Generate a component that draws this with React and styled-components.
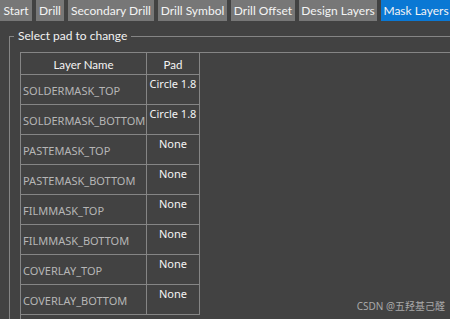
import React from "react";
import styled, { createGlobalStyle } from "styled-components";

const tabs = [
  { label: "Start", width: 32 },
  { label: "Drill", width: 28 },
  { label: "Secondary Drill", width: 86 },
  { label: "Drill Symbol", width: 69 },
  { label: "Drill Offset", width: 64 },
  { label: "Design Layers", width: 78 },
  { label: "Mask Layers", width: 70, active: true },
];

const layers = [
  { name: "SOLDERMASK_TOP", pad: "Circle 1.8" },
  { name: "SOLDERMASK_BOTTOM", pad: "Circle 1.8" },
  { name: "PASTEMASK_TOP", pad: "None" },
  { name: "PASTEMASK_BOTTOM", pad: "None" },
  { name: "FILMMASK_TOP", pad: "None" },
  { name: "FILMMASK_BOTTOM", pad: "None" },
  { name: "COVERLAY_TOP", pad: "None" },
  { name: "COVERLAY_BOTTOM", pad: "None" },
];

const GlobalStyle = createGlobalStyle`
  html, body {
    margin: 0;
    padding: 0;
    background: #424242;
    overflow: hidden;
  }
  body {
    font-family: Lato, "Noto Sans", sans-serif;
    font-size: 11.5px;
  }
`;

const Page = styled.div`
  position: relative;
  width: 450px;
  height: 319px;
  overflow: hidden;
  background: #424242;
`;

const TabBar = styled.div`
  display: flex;
  gap: 4px;
  height: 21px;
`;

const Tab = styled.div`
  display: flex;
  align-items: center;
  justify-content: center;
  width: ${(p) => p.width}px;
  height: 21px;
  font-size: 12px;
  white-space: nowrap;
  color: #f4f4f4;
  background: ${(p) => (p.active ? "#0a78d4" : "#777777")};
  flex-shrink: 0;
`;

const GroupBox = styled.fieldset`
  margin: 7px 0 0 9px;
  padding: 8px 0 0 10px;
  border: none;
  border-top: 1px solid #858585;
  border-left: 1px solid #858585;
  min-inline-size: 0;
  height: 300px;
`;

const Legend = styled.legend`
  margin-left: -6px;
  padding: 0 4px;
  color: #f2f2f2;
  font-size: 12px;
  line-height: 16px;
`;

const GridView = styled.div`
  border-top: 1px solid #858585;
  border-left: 1px solid #858585;
  height: 300px;
`;

const Table = styled.div`
  display: grid;
  grid-template-columns: 126px 53px;
  grid-template-rows: 22px;
  grid-auto-rows: 30px;
`;

const HeadCell = styled.div`
  display: flex;
  align-items: center;
  justify-content: center;
  padding-top: 2px;
  color: #f4f4f4;
  border-right: 1px solid #858585;
  border-bottom: 1px solid #858585;
`;

const Cell = styled.div`
  font-family: "Noto Sans", "Open Sans", sans-serif;
  font-size: 11px;
  white-space: nowrap;
  border-right: 1px solid #858585;
  border-bottom: 1px solid #858585;
`;

const NameCell = styled(Cell)`
  display: flex;
  align-items: center;
  padding: 2px 0 0 2px;
  color: #b6b6b6;
`;

const PadCell = styled(Cell)`
  text-align: center;
  line-height: 16px;
  padding-top: 1px;
  color: #f4f4f4;
`;

const Watermark = styled.div`
  position: absolute;
  right: 5px;
  bottom: 6px;
  font-size: 10px;
  color: #a9a9a9;
  font-family: "Noto Sans", "Noto Sans CJK SC", sans-serif;
`;

export default function App() {
  return (
    <Page>
      <GlobalStyle />
      <TabBar>
        {tabs.map((t) => (
          <Tab key={t.label} width={t.width} active={t.active}>{t.label}</Tab>
        ))}
      </TabBar>
      <GroupBox>
        <Legend>Select pad to change</Legend>
        <GridView>
          <Table>
            <HeadCell>Layer Name</HeadCell>
            <HeadCell>Pad</HeadCell>
            {layers.map((l) => (
              <React.Fragment key={l.name}>
                <NameCell>{l.name}</NameCell>
                <PadCell>{l.pad}</PadCell>
              </React.Fragment>
            ))}
          </Table>
        </GridView>
      </GroupBox>
      <Watermark>CSDN @五羟基己醛</Watermark>
    </Page>
  );
}
